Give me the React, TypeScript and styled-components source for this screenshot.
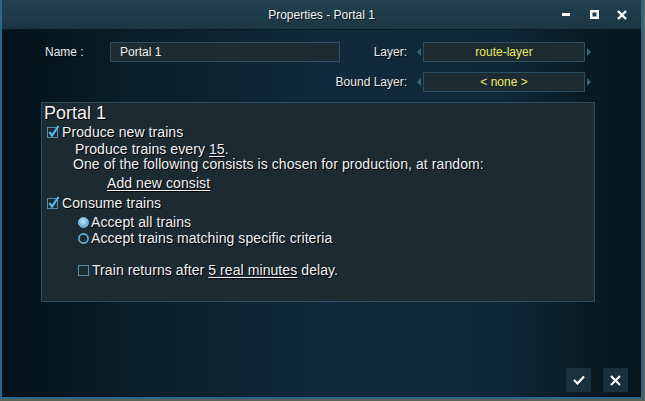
import React from "react";
import styled, { createGlobalStyle } from "styled-components";

const GlobalStyle = createGlobalStyle`
  html, body {
    margin: 0;
    padding: 0;
    background: #5b625a;
  }
  body {
    font-family: "Liberation Sans", Arial, sans-serif;
  }
`;

const Window = styled.div`
  width: 643px;
  height: 399px;
  box-sizing: border-box;
  border: 2px solid #2d6587;
  border-top: none;
  display: flex;
  flex-direction: column;
  background: linear-gradient(
    to right,
    #03121a 0%,
    #0a1f2a 22%,
    #11293a 50%,
    #102838 78%,
    #071922 93%,
    #05161e 100%
  );
`;

const TitleBar = styled.div`
  height: 29px;
  border-bottom: 1px solid #0b1a22;
  background: linear-gradient(#23414f, #1c3543);
  display: grid;
  grid-template-columns: 1fr auto 1fr;
  align-items: center;
`;

const Title = styled.div`
  grid-column: 2;
  color: #f2f2f2;
  font-size: 12px;
  text-shadow: 1px 1px 0 rgba(0, 0, 0, 0.6);
`;

const Controls = styled.div`
  grid-column: 3;
  justify-self: end;
  display: flex;
  padding-right: 5px;
`;

const Control = styled.div`
  width: 28px;
  height: 29px;
  display: flex;
  align-items: center;
  justify-content: center;
`;

const Body = styled.div`
  flex: 1;
  display: flex;
  flex-direction: column;
  padding-top: 12px;
`;

const Form = styled.div`
  margin-left: 43px;
  display: grid;
  grid-template-columns: 65px 230px 67px 16px 162px 16px;
  grid-template-rows: 20px 20px;
  row-gap: 10px;
`;

const Label = styled.div<{ $span?: string }>`
  grid-column: ${({ $span }) => $span || "auto"};
  color: #ececec;
  font-size: 12px;
  line-height: 20px;
  text-align: ${({ $span }) => ($span ? "right" : "left")};
  text-shadow: 1px 1px 0 rgba(0, 0, 0, 0.7);
`;

const LayerLabel = styled(Label)`
  text-align: right;
`;

const TextInput = styled.div`
  box-sizing: border-box;
  border: 1px solid #2a5066;
  background: #1c2a31;
  color: #f0f0f0;
  font-size: 12px;
  line-height: 18px;
  padding-left: 9px;
`;

const Arrow = styled.div<{ $dir: "left" | "right" }>`
  display: flex;
  align-items: center;
  justify-content: ${({ $dir }) => ($dir === "left" ? "flex-end" : "flex-start")};
  padding: ${({ $dir }) => ($dir === "left" ? "0 2px 0 0" : "0 0 0 2px")};
`;

const ValueBox = styled.div`
  box-sizing: border-box;
  border: 1px solid #2a5066;
  background: #1c2a31;
  color: #ecec62;
  font-size: 12px;
  line-height: 18px;
  text-align: center;
`;

const Panel = styled.div`
  margin: 10px 0 0 39px;
  width: 554px;
  height: 200px;
  box-sizing: border-box;
  border: 1px solid #2b4e62;
  background: #1c2a32;
  padding-left: 2px;
  display: flex;
  flex-direction: column;
  color: #f2f2f2;
  text-shadow: 1px 1px 0 #000;
`;

const Heading = styled.div`
  height: 21px;
  font-size: 18px;
  line-height: 21px;
`;

const Row = styled.div<{ $h: number; $indent: number }>`
  height: ${({ $h }) => $h}px;
  padding-left: ${({ $indent }) => $indent}px;
  display: flex;
  align-items: flex-start;
  font-size: 14px;
  line-height: 16px;
  letter-spacing: 0.08px;
  white-space: nowrap;
`;

const Mark = styled.span<{ $w: number }>`
  display: inline-flex;
  flex: none;
  width: ${({ $w }) => $w}px;
  height: 16px;
  align-items: center;
`;

const Link = styled.span`
  text-decoration: underline;
  text-underline-offset: 2px;
`;

const Footer = styled.div`
  margin-top: auto;
  display: flex;
  justify-content: flex-end;
  gap: 12px;
  padding: 0 13px 5px 0;
`;

const ActionButton = styled.div`
  width: 25px;
  height: 24px;
  background: #19313e;
  display: flex;
  align-items: center;
  justify-content: center;
`;

const Check = ({ checked, w }: { checked: boolean; w: number }) => (
  <Mark $w={w}>
    <svg width="14" height="14" viewBox="0 0 14 14">
      <rect x="1.5" y="2.5" width="10" height="10" fill="none" stroke="#5a8aa6" />
      {checked && (
        <polyline
          points="3.5,7 6,10.5 12.5,1"
          fill="none"
          stroke="#5cb6ee"
          strokeWidth="2.2"
        />
      )}
    </svg>
  </Mark>
);

const Radio = ({ on }: { on: boolean }) => (
  <Mark $w={14}>
    <svg width="13" height="13" viewBox="0 0 13 13">
      <defs>
        <radialGradient id="rg" cx="45%" cy="40%" r="60%">
          <stop offset="0%" stopColor="#c4e6fa" />
          <stop offset="100%" stopColor="#5aa4d2" />
        </radialGradient>
      </defs>
      {on ? (
        <circle cx="6.5" cy="6.5" r="5" fill="url(#rg)" stroke="#7cbde2" strokeWidth="1" />
      ) : (
        <circle cx="6.5" cy="6.5" r="4.6" fill="none" stroke="#6cb2dc" strokeWidth="1.6" />
      )}
    </svg>
  </Mark>
);

const Tri = ({ dir }: { dir: "left" | "right" }) => (
  <svg width="4" height="8" viewBox="0 0 4 8">
    <polygon points={dir === "left" ? "4,0 4,8 0,4" : "0,0 0,8 4,4"} fill="#3f6378" />
  </svg>
);

export default function App() {
  return (
    <>
      <GlobalStyle />
      <Window>
        <TitleBar>
          <Title>Properties - Portal 1</Title>
          <Controls>
            <Control>
              <svg width="8" height="3" viewBox="0 0 8 3">
                <rect width="8" height="3" fill="#fff" />
              </svg>
            </Control>
            <Control>
              <svg width="9" height="9" viewBox="0 0 9 9">
                <rect x="1.25" y="1.25" width="6.5" height="6.5" fill="none" stroke="#fff" strokeWidth="2.5" />
              </svg>
            </Control>
            <Control>
              <svg width="10" height="10" viewBox="0 0 10 10">
                <path d="M1 1 L9 9 M9 1 L1 9" stroke="#fff" strokeWidth="2.4" />
              </svg>
            </Control>
          </Controls>
        </TitleBar>
        <Body>
          <Form>
            <Label>Name :</Label>
            <TextInput>Portal 1</TextInput>
            <LayerLabel>Layer:</LayerLabel>
            <Arrow $dir="left">
              <Tri dir="left" />
            </Arrow>
            <ValueBox>route-layer</ValueBox>
            <Arrow $dir="right">
              <Tri dir="right" />
            </Arrow>
            <Label $span="1 / 4">Bound Layer:</Label>
            <Arrow $dir="left">
              <Tri dir="left" />
            </Arrow>
            <ValueBox>&lt; none &gt;</ValueBox>
            <Arrow $dir="right">
              <Tri dir="right" />
            </Arrow>
          </Form>
          <Panel>
            <Heading>Portal 1</Heading>
            <Row $h={17} $indent={2}>
              <Check checked w={16} />
              Produce new trains
            </Row>
            <Row $h={15} $indent={31}>
              Produce trains every&nbsp;<Link>15</Link>.
            </Row>
            <Row $h={19} $indent={29}>
              One of the following consists is chosen for production, at random:
            </Row>
            <Row $h={20} $indent={63}>
              <Link>Add new consist</Link>
            </Row>
            <Row $h={19} $indent={2}>
              <Check checked w={16} />
              Consume trains
            </Row>
            <Row $h={16} $indent={33}>
              <Radio on />
              Accept all trains
            </Row>
            <Row $h={32} $indent={33}>
              <Radio on={false} />
              Accept trains matching specific criteria
            </Row>
            <Row $h={16} $indent={33}>
              <Check checked={false} w={15} />
              Train returns after&nbsp;<Link>5 real minutes</Link>&nbsp;delay.
            </Row>
          </Panel>
          <Footer>
            <ActionButton>
              <svg width="12" height="10" viewBox="0 0 12 10">
                <polyline points="1,5 4.5,8.5 11,1.5" fill="none" stroke="#fff" strokeWidth="2.2" />
              </svg>
            </ActionButton>
            <ActionButton>
              <svg width="11" height="11" viewBox="0 0 11 11">
                <path d="M1 1 L10 10 M10 1 L1 10" stroke="#fff" strokeWidth="2" />
              </svg>
            </ActionButton>
          </Footer>
        </Body>
      </Window>
    </>
  );
}
